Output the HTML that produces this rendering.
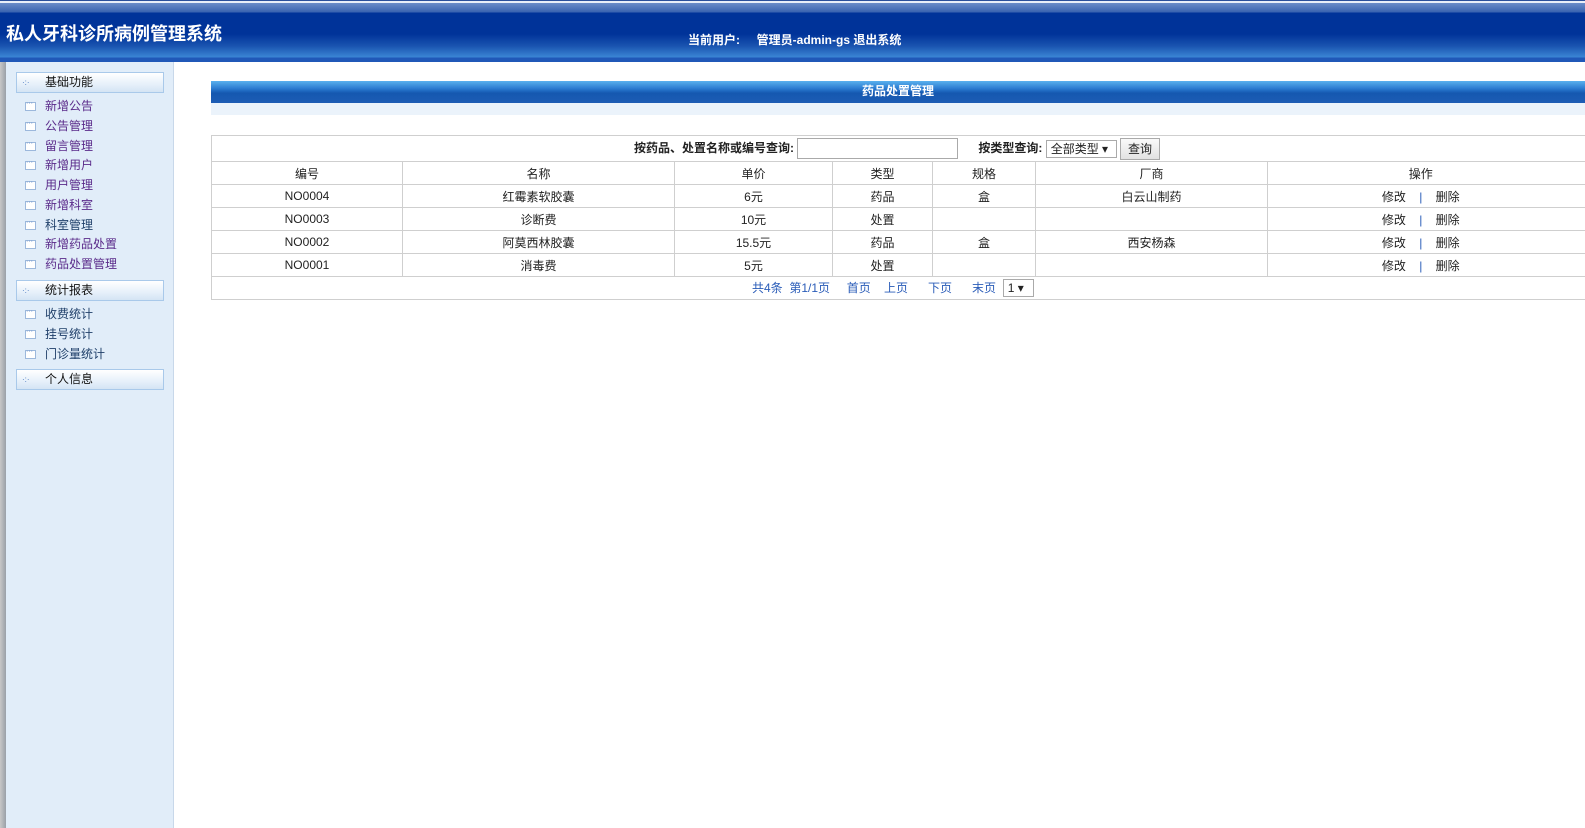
<!DOCTYPE html>
<html><head><meta charset="utf-8"><style>
*{margin:0;padding:0;box-sizing:border-box}
body{width:1585px;height:828px;overflow:hidden;background:#fff;font-family:"Liberation Sans","Noto Sans CJK SC",sans-serif;font-size:12px;color:#222;position:relative}
.abs{position:absolute}
#hdr{left:0;top:0;width:1585px;height:62px;background:linear-gradient(#2a4f9a 0,#2a4f9a 1px,#e8eef8 1px,#e8eef8 3px,#6a8cc8 3px,#3a64b0 12px,#003399 13px,#003399 34px,#1a54b0 46px,#3a84d4 57px,#2058b8 58px,#2058b8 62px)}
#title{left:6px;top:20px;color:#fff;font-size:18px;font-weight:bold}
#user{left:688px;top:31px;color:#fff;font-size:12px;font-weight:bold}
#left{left:0;top:62px;width:6px;height:766px;background:linear-gradient(90deg,#c8c8c8,#9aa0a8)}
#side{left:6px;top:62px;width:168px;height:766px;background:#e1edf9;border-right:1px solid #c8d8ea}
.grp{position:absolute;left:10px;width:148px;height:21px;border:1px solid #a9c9ea;background:linear-gradient(#fff,#e6f0fa 60%,#d4e4f4);font-size:12px;line-height:19px;padding-left:28px;color:#111}
.grp:before{content:"·:·";position:absolute;left:5px;top:0;color:#4a78c0;font-size:8px}
.it{position:absolute;left:19px;font-size:12px;color:#5a2a8a;padding-left:20px;line-height:16px}
.it:before{content:"";position:absolute;left:0;top:4px;width:9px;height:7px;border:1px solid #9cb8dc;background:#fff}
.it:after{content:"···";position:absolute;left:1px;top:-2px;font-size:7px;color:#4a78c0}
.it.b{color:#20406a}
#bar{left:211px;top:81px;width:1374px;height:22px;background:linear-gradient(#5ab0ee,#2a7ad0 35%,#1558b0 55%,#1d5cb4);color:#fff;font-weight:bold;text-align:center;line-height:21px;font-size:12px}
#bar2{left:211px;top:103px;width:1374px;height:12px;background:#ebf3fb}
table{position:absolute;left:211px;top:135px;border-collapse:collapse;table-layout:fixed;width:1390px}
td{border:1px solid #cfcfcf;height:23px;text-align:center;font-size:12px;color:#222;white-space:nowrap}
td.op{border-right:none;padding-right:28px}
.lk{color:#2a5cb8}
.sel{display:inline-block;border:1px solid #aaa;background:#fff;height:18px;line-height:16px;vertical-align:middle;font-size:12px}
</style></head><body>
<div id="hdr" class="abs"></div>
<div id="title" class="abs">私人牙科诊所病例管理系统</div>
<div id="user" class="abs">当前用户:&nbsp;&nbsp;&nbsp;&nbsp;&nbsp;管理员-admin-gs 退出系统</div>
<div id="left" class="abs"></div>
<div id="side" class="abs">
<div class="grp" style="top:10px">基础功能</div>
<div class="it" style="top:36px">新增公告</div>
<div class="it" style="top:56px">公告管理</div>
<div class="it" style="top:76px">留言管理</div>
<div class="it" style="top:95px">新增用户</div>
<div class="it" style="top:115px">用户管理</div>
<div class="it" style="top:135px">新增科室</div>
<div class="it b" style="top:155px">科室管理</div>
<div class="it" style="top:174px">新增药品处置</div>
<div class="it" style="top:194px">药品处置管理</div>
<div class="grp" style="top:218px">统计报表</div>
<div class="it b" style="top:244px">收费统计</div>
<div class="it b" style="top:264px">挂号统计</div>
<div class="it b" style="top:284px">门诊量统计</div>
<div class="grp" style="top:307px">个人信息</div>
</div>
<div id="bar" class="abs">药品处置管理</div>
<div id="bar2" class="abs"></div>
<table>
<colgroup><col style="width:191px"><col style="width:272px"><col style="width:158px"><col style="width:100px"><col style="width:103px"><col style="width:232px"><col style="width:334px"></colgroup>
<tr><td colspan="7" style="height:26px;border-right:none;text-align:left;padding-left:422px"><b>按药品、处置名称或编号查询:</b> <span class="sel" style="width:161px;height:21px"></span> &nbsp;&nbsp;&nbsp;&nbsp; <b>按类型查询:</b> <span class="sel" style="width:71px;text-align:left;padding-left:4px">全部类型 ▾</span> <span class="sel" style="width:40px;height:22px;line-height:20px;background:linear-gradient(#fafafa,#e2e2e2);text-align:center">查询</span></td></tr>
<tr><td>编号</td><td>名称</td><td>单价</td><td>类型</td><td>规格</td><td>厂商</td><td class="op">操作</td></tr>
<tr><td>NO0004</td><td>红霉素软胶囊</td><td>6元</td><td>药品</td><td>盒</td><td>白云山制药</td><td class="op">修改 &nbsp;&nbsp; <span style="color:#2a5cb8">|</span> &nbsp;&nbsp; 删除</td></tr>
<tr><td>NO0003</td><td>诊断费</td><td>10元</td><td>处置</td><td></td><td></td><td class="op">修改 &nbsp;&nbsp; <span style="color:#2a5cb8">|</span> &nbsp;&nbsp; 删除</td></tr>
<tr><td>NO0002</td><td>阿莫西林胶囊</td><td>15.5元</td><td>药品</td><td>盒</td><td>西安杨森</td><td class="op">修改 &nbsp;&nbsp; <span style="color:#2a5cb8">|</span> &nbsp;&nbsp; 删除</td></tr>
<tr><td>NO0001</td><td>消毒费</td><td>5元</td><td>处置</td><td></td><td></td><td class="op">修改 &nbsp;&nbsp; <span style="color:#2a5cb8">|</span> &nbsp;&nbsp; 删除</td></tr>
<tr><td colspan="7" style="border-right:none;text-align:left;padding-left:540px"><span class="lk">共4条 &nbsp;第1/1页 &nbsp;&nbsp;&nbsp; 首页 &nbsp;&nbsp; 上页 &nbsp;&nbsp;&nbsp;&nbsp; 下页 &nbsp;&nbsp;&nbsp;&nbsp; 末页</span> &nbsp;<span class="sel" style="width:31px;padding-left:4px;text-align:left">1 ▾</span></td></tr>
</table>
</body></html>
